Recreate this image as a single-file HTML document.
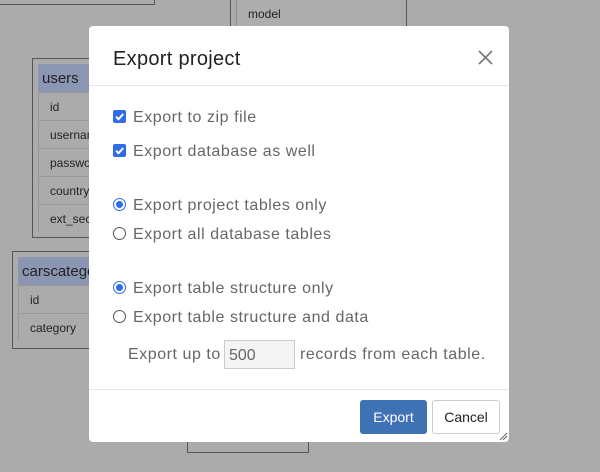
<!DOCTYPE html>
<html><head><style>
body{margin:0;width:600px;height:472px;background:#ababab;position:relative;overflow:hidden;font-family:"Liberation Sans",Arial,sans-serif;}
.box{position:absolute;border:1px solid #555;box-sizing:border-box;}
.inner{position:absolute;background:#adadad;border-left:1px solid #8e8e8e;}
.hdr{position:absolute;background:#8a96b2;color:#222;font-size:15px;padding-left:4px;box-sizing:border-box;line-height:29px;}
.row{position:absolute;border-top:1px solid #999;border-left:1px solid #999;font-size:12px;color:#222;box-sizing:border-box;line-height:29px;padding-left:11px;}
.modal{position:absolute;left:89px;top:26px;width:420px;height:416px;background:#fff;border-radius:4px;}
.t{position:absolute;color:#666;font-size:16px;letter-spacing:0.55px;}
.cb{position:absolute;width:13px;height:13px;background:#2f6de8;border-radius:2px;}
.rd{position:absolute;width:13px;height:13px;border-radius:50%;border:1px solid #555;box-sizing:border-box;}
.rd.on{border:1px solid #2f6de8;}
.rd.on:after{content:"";position:absolute;left:2px;top:2px;width:7px;height:7px;border-radius:50%;background:#2f6de8;}
</style></head><body>
<div class="box" style="left:-10px;top:-10px;width:165px;height:15px"></div>
<div class="box" style="left:230px;top:-10px;width:177px;height:100px"></div>
<div class="inner" style="left:236px;top:-10px;width:164px;height:100px"></div>
<div style="position:absolute;left:248px;top:7px;font-size:12px;color:#222">model</div>
<div class="box" style="left:32px;top:58px;width:120px;height:180px"></div>
<div class="hdr" style="left:38px;top:64px;width:60px;height:28px">users</div>
<div class="row" style="left:38px;top:92px;width:60px;height:28px">id</div>
<div class="row" style="left:38px;top:120px;width:60px;height:28px">usernam</div>
<div class="row" style="left:38px;top:148px;width:60px;height:28px">password</div>
<div class="row" style="left:38px;top:176px;width:60px;height:28px">country</div>
<div class="row" style="left:38px;top:204px;width:60px;height:28px">ext_sec</div>
<div class="box" style="left:12px;top:251px;width:120px;height:98px"></div>
<div class="hdr" style="left:18px;top:257px;width:80px;height:28px">carscategory</div>
<div class="row" style="left:18px;top:285px;width:80px;height:28px">id</div>
<div class="row" style="left:18px;top:313px;width:80px;height:28px">category</div>
<div class="box" style="left:187px;top:420px;width:122px;height:33px"></div>
<div class="modal">
<div style="position:absolute;left:24px;top:22px;font-size:20px;color:#222;letter-spacing:0.3px">Export project</div>
<svg style="position:absolute;left:389px;top:24px" width="15" height="15"><path d="M1 1L14 14M14 1L1 14" stroke="#777" stroke-width="1.6"/></svg>
<div style="position:absolute;left:0;top:59px;width:420px;height:1px;background:#e5e5e5"></div>
<div class="cb" style="left:24px;top:84px"><svg width="13" height="13"><path d="M3 6.7L5.5 9.2L10.2 4" stroke="#fff" stroke-width="2" fill="none"/></svg></div>
<div class="t" style="left:44px;top:83px">Export to zip file</div>
<div class="cb" style="left:24px;top:118px"><svg width="13" height="13"><path d="M3 6.7L5.5 9.2L10.2 4" stroke="#fff" stroke-width="2" fill="none"/></svg></div>
<div class="t" style="left:44px;top:117px">Export database as well</div>
<div class="rd on" style="left:24px;top:172px"></div>
<div class="t" style="left:44px;top:171px">Export project tables only</div>
<div class="rd" style="left:24px;top:201px"></div>
<div class="t" style="left:44px;top:200px">Export all database tables</div>
<div class="rd on" style="left:24px;top:255px"></div>
<div class="t" style="left:44px;top:254px">Export table structure only</div>
<div class="rd" style="left:24px;top:284px"></div>
<div class="t" style="left:44px;top:283px">Export table structure and data</div>
<div class="t" style="left:39px;top:320px">Export up to</div>
<div style="position:absolute;left:135px;top:314px;width:71px;height:29px;box-sizing:border-box;border:1px solid #ccc;background:#f4f4f4;color:#666;font-size:16px;padding:6px 0 0 4px">500</div>
<div class="t" style="left:211px;top:320px">records from each table.</div>
<div style="position:absolute;left:0;top:363px;width:420px;height:1px;background:#e5e5e5"></div>
<div style="position:absolute;left:271px;top:374px;width:67px;height:34px;background:#3f72b5;border-radius:3px;color:#fff;font-size:14px;text-align:center;line-height:34px">Export</div>
<div style="position:absolute;left:343px;top:374px;width:68px;height:34px;box-sizing:border-box;border:1px solid #ccc;border-radius:3px;color:#222;font-size:14px;text-align:center;line-height:32px">Cancel</div>
<svg style="position:absolute;left:410px;top:406px" width="9" height="9"><path d="M1 8L8 1M4 8L8 4" stroke="#666" stroke-width="1"/></svg>
</div>
</body></html>
